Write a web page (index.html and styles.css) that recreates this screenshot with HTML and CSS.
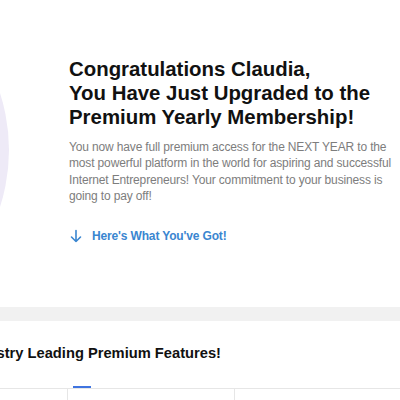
FILE: index.html
```html
<!DOCTYPE html>
<html>
<head>
<meta charset="utf-8">
<link rel="stylesheet" href="styles.css">
</head>
<body>
<section class="hero">
  <div class="avatar"></div>
  <div class="hero-text">
    <h1 class="title">Congratulations Claudia,<br>You Have Just Upgraded to the<br>Premium Yearly Membership!</h1>
    <p class="lead">You now have full premium access for the NEXT YEAR to the most powerful platform in the world for aspiring and successful Internet Entrepreneurs! Your commitment to your business is going to pay off!</p>
    <a class="cta" href="#">
      <svg class="arrow" width="12" height="14" viewBox="0 0 12 14"><path d="M6 1.5V12.5M1.5 8L6 12.5L10.5 8" fill="none" stroke="#3a86d0" stroke-width="1.6" stroke-linecap="round" stroke-linejoin="round"/></svg>
      <span>Here's What You've Got!</span>
    </a>
  </div>
</section>
<div class="band"></div>
<section class="features">
  <div class="feat-head"><h2>Our Industry Leading Premium Features!</h2></div>
  <div class="tabs">
    <div class="tab tab-first"></div>
    <div class="tab tab-active"><span class="indicator"></span></div>
    <div class="tab tab-rest"></div>
  </div>
</section>
</body>
</html>
```
FILE: styles.css
```css
html, body {
  margin: 0;
  padding: 0;
  background: #ffffff;
  font-family: "Liberation Sans", Arial, sans-serif;
  overflow: hidden;
}
.hero {
  position: relative;
  height: 307px;
  overflow: hidden;
}
.avatar {
  position: absolute;
  left: -361px;
  top: -35px;
  width: 370px;
  height: 370px;
  border-radius: 50%;
  background: #eeeaf7;
}
.hero-text {
  position: relative;
  padding: 57px 0 0 69px;
}
.title {
  margin: 0;
  font-size: 20.4px;
  line-height: 24px;
  font-weight: bold;
  color: #111111;
}
.lead {
  margin: 10px 0 0 0;
  width: 330px;
  font-size: 12px;
  letter-spacing: -0.15px;
  line-height: 16.4px;
  color: #7d7d7d;
}
.cta {
  display: flex;
  align-items: center;
  gap: 10px;
  margin: 24px 0 0 1px;
  text-decoration: none;
  color: #3a86d0;
  font-size: 12px;
  letter-spacing: -0.15px;
  font-weight: bold;
}
.arrow {
  display: block;
}
.band {
  height: 14px;
  background: #f1f1f1;
}
.features {
  height: 79px;
  display: flex;
  flex-direction: column;
}
.feat-head {
  display: flex;
  justify-content: flex-end;
  width: 221px;
  padding-top: 22px;
  height: 45px;
  box-sizing: border-box;
}
.feat-head h2 {
  margin: 0;
  white-space: nowrap;
  font-size: 14.7px;
  line-height: 20px;
  font-weight: bold;
  color: #111111;
}
.tabs {
  margin-top: 22px;
  display: flex;
  border-top: 1px solid #e6e6e6;
  flex: 1;
}
.tab {
  position: relative;
}
.tab-first {
  width: 67px;
  border-right: 1px solid #e6e6e6;
}
.tab-active {
  width: 166px;
  border-right: 1px solid #e6e6e6;
}
.tab-rest {
  flex: 1;
}
.indicator {
  position: absolute;
  left: 5px;
  top: -3px;
  width: 18px;
  height: 2px;
  background: #3f74e0;
}
```
